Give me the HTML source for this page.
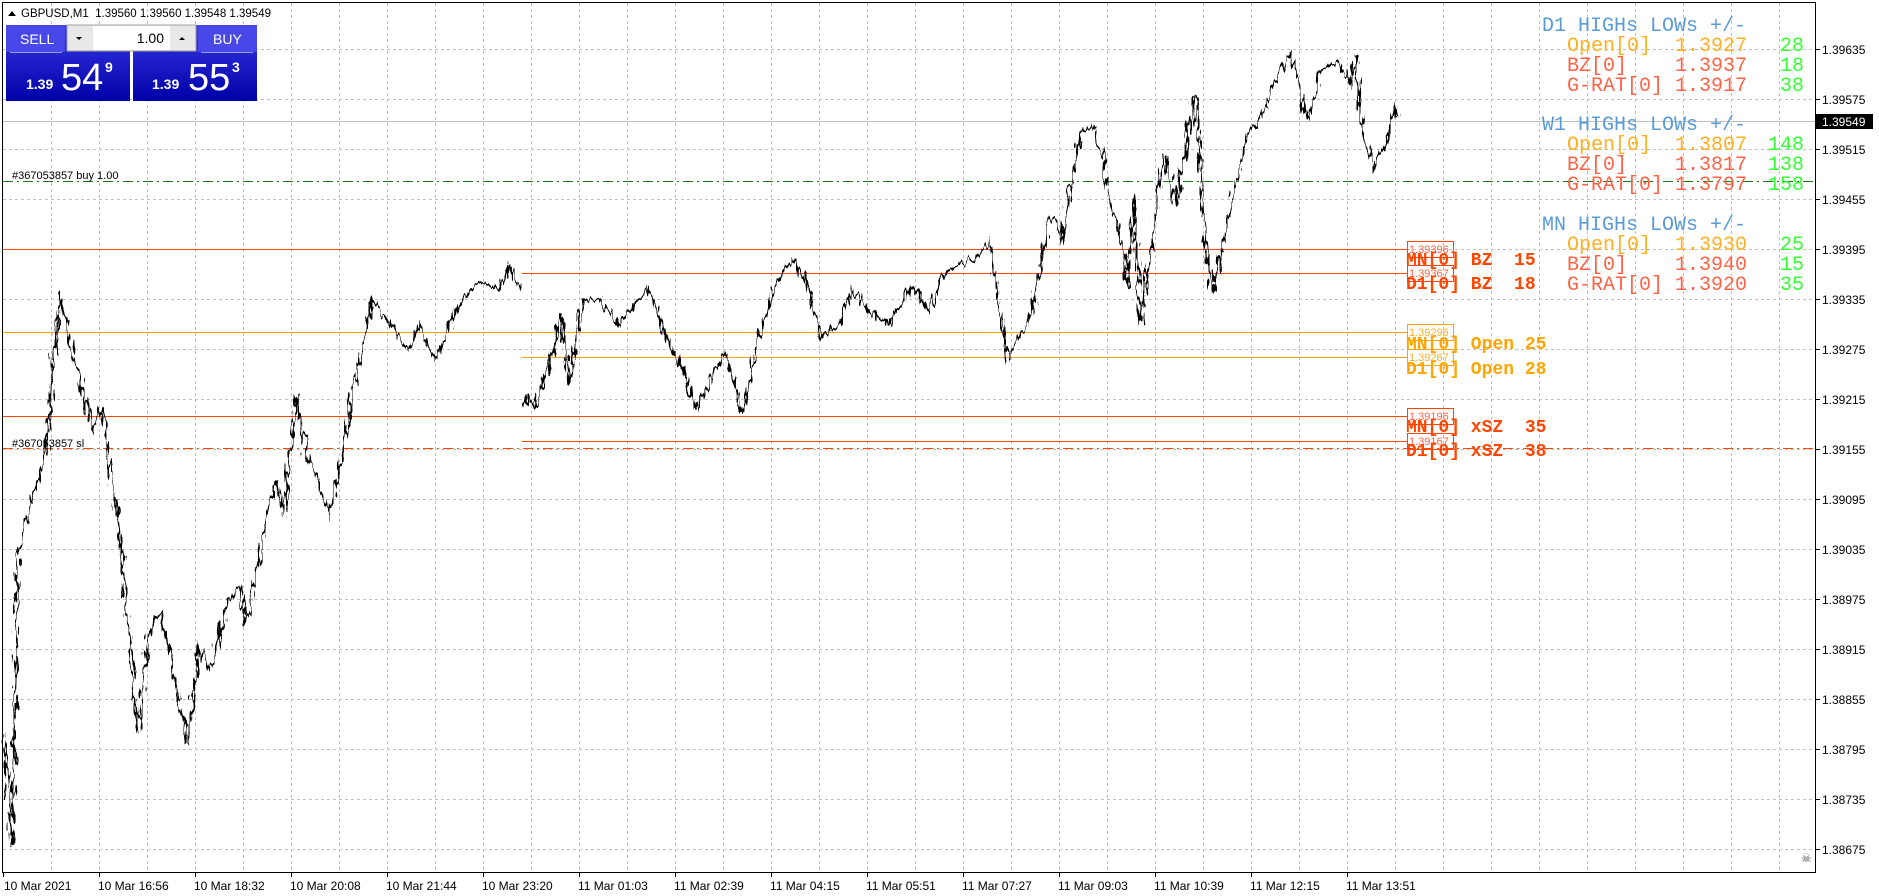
<!DOCTYPE html>
<html><head><meta charset="utf-8"><style>
html,body{margin:0;padding:0;background:#fff;width:1879px;height:896px;overflow:hidden}
svg{display:block}
text{white-space:pre}
.ax{font-family:"Liberation Sans",sans-serif;font-size:12px;fill:#000}
.mono{font-family:"Liberation Mono",monospace;font-size:20px}
.lb{font-family:"Liberation Mono",monospace;font-size:18px;font-weight:bold}
.sm{font-family:"Liberation Sans",sans-serif;font-size:11px}
</style></head><body>
<svg width="1879" height="896" viewBox="0 0 1879 896" xmlns="http://www.w3.org/2000/svg">
<defs>
<filter id="n" x="-5%" y="-5%" width="110%" height="110%">
<feTurbulence type="fractalNoise" baseFrequency="0.3 0.06" numOctaves="2" seed="3"/>
<feDisplacementMap in="SourceGraphic" scale="14" xChannelSelector="R" yChannelSelector="G"/>
</filter>
<linearGradient id="bl" x1="0" y1="0" x2="0" y2="1"><stop offset="0" stop-color="#3a3ae6"/><stop offset="1" stop-color="#0000a8"/></linearGradient>
</defs>
<g stroke="#c0c0c0" stroke-width="1" stroke-dasharray="3,3">
<path d="M3 49.5H1815M3 99.5H1815M3 149.5H1815M3 199.5H1815M3 249.5H1815M3 299.5H1815M3 349.5H1815M3 399.5H1815M3 449.5H1815M3 499.5H1815M3 549.5H1815M3 599.5H1815M3 649.5H1815M3 699.5H1815M3 749.5H1815M3 799.5H1815M3 849.5H1815"/>
<path d="M51.5 3V872M99.5 3V872M147.5 3V872M195.5 3V872M243.5 3V872M291.5 3V872M339.5 3V872M387.5 3V872M435.5 3V872M483.5 3V872M531.5 3V872M579.5 3V872M627.5 3V872M675.5 3V872M723.5 3V872M771.5 3V872M819.5 3V872M867.5 3V872M915.5 3V872M963.5 3V872M1011.5 3V872M1059.5 3V872M1107.5 3V872M1155.5 3V872M1203.5 3V872M1251.5 3V872M1299.5 3V872M1347.5 3V872M1395.5 3V872M1443.5 3V872M1491.5 3V872M1539.5 3V872M1587.5 3V872M1635.5 3V872M1683.5 3V872M1731.5 3V872M1779.5 3V872"/>
</g>
<path d="M3 121.5H1815" stroke="#c0c0c0"/>
<path d="M3 181.5H1815" stroke="#1a7a1a" stroke-dasharray="10,4,2,4"/>
<path d="M3 448.5H1815" stroke="#ff4500" stroke-dasharray="10,4,2,4"/>
<g stroke="#ff4500"><path d="M3 249.5H1407M522 273.5H1407M3 416.5H1407M522 441.5H1407"/></g>
<g stroke="#ffa500"><path d="M3 332.5H1407M522 357.5H1407"/></g>
<g filter="url(#n)" fill="none" stroke="#000" stroke-width="2.2">
<polyline points="4,732 12,846 18,552 30,504 46,456 54,348 60,294 66,324 74,360 84,396 94,432 102,408 108,456 116,504 124,576 132,672 138,732 150,624 162,612 178,696 188,744 198,648 210,672 228,600 240,588 246,624 258,564 266,516 276,480 284,516 296,396 307,456 318,480 330,516 342,456 354,384 362,348 372,300 390,324 408,348 420,324 434,360 450,324 462,300 480,282 498,288 510,266 518,288 522,284"/>
<polyline points="524,408 528,396 534,408 552,360 560,312 570,384 582,300 600,300 618,324 648,288 666,336 684,372 696,408 714,372 726,354 742,414 756,348 774,288 792,258 804,276 822,336 840,324 852,288 870,312 888,324 912,288 930,312 942,276 960,264 978,258 990,240 998,300 1008,360 1020,336 1032,312 1050,216 1062,240 1072,180 1080,132 1094,126 1102,156 1110,204 1122,240 1128,288 1134,192 1140,324 1152,240 1164,156 1176,204 1188,132 1194,96 1200,156 1206,240 1212,294 1224,240 1236,180 1248,132 1266,108 1278,72 1290,54 1302,96 1308,120 1320,72 1338,60 1350,84 1356,54 1362,132 1374,168 1386,144 1394,108 1398,118"/>
</g>
<path d="M2.5 2.5H1815.5V872.5H2.5Z" fill="none" stroke="#000"/>
<g class="ax">
<g stroke="#000"><path d="M1815 49.5h5M1815 99.5h5M1815 149.5h5M1815 199.5h5M1815 249.5h5M1815 299.5h5M1815 349.5h5M1815 399.5h5M1815 449.5h5M1815 499.5h5M1815 549.5h5M1815 599.5h5M1815 649.5h5M1815 699.5h5M1815 749.5h5M1815 799.5h5M1815 849.5h5"/></g>
<text x="1822" y="54">1.39635</text><text x="1822" y="104">1.39575</text><text x="1822" y="154">1.39515</text><text x="1822" y="204">1.39455</text><text x="1822" y="254">1.39395</text><text x="1822" y="304">1.39335</text><text x="1822" y="354">1.39275</text><text x="1822" y="404">1.39215</text><text x="1822" y="454">1.39155</text><text x="1822" y="504">1.39095</text><text x="1822" y="554">1.39035</text><text x="1822" y="604">1.38975</text><text x="1822" y="654">1.38915</text><text x="1822" y="704">1.38855</text><text x="1822" y="754">1.38795</text><text x="1822" y="804">1.38735</text><text x="1822" y="854">1.38675</text>
<rect x="1816" y="114" width="57" height="15" fill="#000"/><text x="1822" y="126" fill="#fff">1.39549</text>
</g>
<g class="ax">
<g stroke="#000"><path d="M3.5 872v5M99.5 872v5M195.5 872v5M291.5 872v5M387.5 872v5M483.5 872v5M579.5 872v5M675.5 872v5M771.5 872v5M867.5 872v5M963.5 872v5M1059.5 872v5M1155.5 872v5M1251.5 872v5M1347.5 872v5"/></g>
<text x="4" y="890">10 Mar 2021</text><text x="98" y="890">10 Mar 16:56</text><text x="194" y="890">10 Mar 18:32</text><text x="290" y="890">10 Mar 20:08</text><text x="386" y="890">10 Mar 21:44</text><text x="482" y="890">10 Mar 23:20</text><text x="578" y="890">11 Mar 01:03</text><text x="674" y="890">11 Mar 02:39</text><text x="770" y="890">11 Mar 04:15</text><text x="866" y="890">11 Mar 05:51</text><text x="962" y="890">11 Mar 07:27</text><text x="1058" y="890">11 Mar 09:03</text><text x="1154" y="890">11 Mar 10:39</text><text x="1250" y="890">11 Mar 12:15</text><text x="1346" y="890">11 Mar 13:51</text>
</g>
<path d="M8 16l4-5 4 5z" fill="#000"/>
<text class="ax" x="21" y="17" style="font-size:11.5px">GBPUSD,M1  1.39560 1.39560 1.39548 1.39549</text>
<text class="ax" x="12" y="179" style="font-size:11px">#367053857 buy 1.00</text>
<text class="ax" x="12" y="447" style="font-size:11px">#367053857 sl</text>
<rect x="6" y="25" width="124" height="76" fill="url(#bl)"/>
<rect x="133" y="25" width="124" height="76" fill="url(#bl)"/>
<rect x="6" y="25" width="59" height="27" fill="#4848e8"/>
<rect x="198" y="25" width="59" height="27" fill="#4848e8"/>
<path d="M10 52.5H62M201 52.5H253" stroke="#9a9af0"/>
<rect x="67" y="25" width="129" height="26" fill="#e8e8e8" stroke="#a0a0a0"/>
<rect x="93" y="26" width="77" height="24" fill="#fff"/>
<path d="M76 37h6l-3 3z M179 40h6l-3-3z" fill="#000"/>
<text x="164" y="43" text-anchor="end" font-family="Liberation Sans,sans-serif" font-size="14">1.00</text>
<text x="20" y="44" fill="#fff" font-family="Liberation Sans,sans-serif" font-size="14">SELL</text>
<text x="213" y="44" fill="#fff" font-family="Liberation Sans,sans-serif" font-size="14">BUY</text>
<g fill="#fff" font-family="Liberation Sans,sans-serif">
<text x="26" y="89" font-size="14" font-weight="bold">1.39</text><text x="61" y="90" font-size="38">54</text><text x="105" y="72" font-size="14" font-weight="bold">9</text>
<text x="152" y="89" font-size="14" font-weight="bold">1.39</text><text x="188" y="90" font-size="38">55</text><text x="232" y="72" font-size="14" font-weight="bold">3</text>
</g>
<g class="mono">
<text x="1542" y="31" fill="#5b9bd5">D1 HIGHs LOWs +/-</text>
<text x="1567" y="51" fill="#ffb020">Open[0]  1.3927</text>
<text x="1567" y="71" fill="#ff6347">BZ[0]    1.3937</text>
<text x="1567" y="91" fill="#ff6347">G-RAT[0] 1.3917</text>
<text x="1542" y="130" fill="#5b9bd5">W1 HIGHs LOWs +/-</text>
<text x="1567" y="150" fill="#ffb020">Open[0]  1.3807</text>
<text x="1567" y="170" fill="#ff6347">BZ[0]    1.3817</text>
<text x="1567" y="190" fill="#ff6347">G-RAT[0] 1.3797</text>
<text x="1542" y="230" fill="#5b9bd5">MN HIGHs LOWs +/-</text>
<text x="1567" y="250" fill="#ffb020">Open[0]  1.3930</text>
<text x="1567" y="270" fill="#ff6347">BZ[0]    1.3940</text>
<text x="1567" y="290" fill="#ff6347">G-RAT[0] 1.3920</text>
<g fill="#33ff33" text-anchor="end">
<text x="1804" y="51">28</text><text x="1804" y="71">18</text><text x="1804" y="91">38</text>
<text x="1804" y="150">148</text><text x="1804" y="170">138</text><text x="1804" y="190">158</text>
<text x="1804" y="250">25</text><text x="1804" y="270">15</text><text x="1804" y="290">35</text>
</g>
</g>
<g fill="none" stroke-width="1">
<rect x="1407.5" y="241.5" width="46" height="16" stroke="#ff4500"/>
<rect x="1407.5" y="265.5" width="46" height="16" stroke="#ff4500"/>
<rect x="1407.5" y="324.5" width="46" height="16" stroke="#ffa500"/>
<rect x="1407.5" y="349.5" width="46" height="16" stroke="#ffa500"/>
<rect x="1407.5" y="408.5" width="46" height="16" stroke="#ff4500"/>
<rect x="1407.5" y="433.5" width="46" height="16" stroke="#ff4500"/>
</g>
<g class="sm">
<text x="1409" y="253" fill="#ff6347">1.39396</text>
<text x="1409" y="277" fill="#ff6347">1.39367</text>
<text x="1409" y="336" fill="#ffb020">1.39296</text>
<text x="1409" y="361" fill="#ffb020">1.39267</text>
<text x="1409" y="420" fill="#ff6347">1.39196</text>
<text x="1409" y="445" fill="#ff6347">1.39167</text>
</g>
<g class="lb">
<text x="1406" y="265" fill="#ff4500">MN[0] BZ  15</text>
<text x="1406" y="289" fill="#ff4500">D1[0] BZ  18</text>
<text x="1406" y="349" fill="#ffa500">MN[0] Open 25</text>
<text x="1406" y="374" fill="#ffa500">D1[0] Open 28</text>
<text x="1406" y="432" fill="#ff4500">MN[0] xSZ  35</text>
<text x="1406" y="456" fill="#ff4500">D1[0] xSZ  38</text>
</g>
<text x="1801" y="862" font-size="12" fill="#555" font-family="DejaVu Sans,sans-serif">☠</text>
</svg>
</body></html>
